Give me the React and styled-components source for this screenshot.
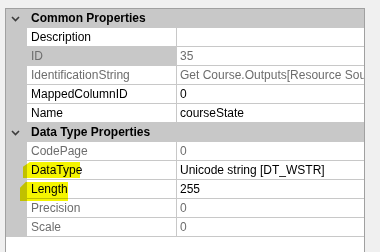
import React from "react";
import styled, { createGlobalStyle } from "styled-components";

const Global = createGlobalStyle`
  html, body { margin: 0; padding: 0; background: #f0f0f0; overflow: hidden; }
  body { font-family: "Liberation Sans", Arial, sans-serif; font-size: 12px; }
`;

const Page = styled.div`
  padding: 8px 0 0 5px;
  height: 252px;
  box-sizing: border-box;
`;

const Panel = styled.div`
  position: relative;
  width: 360px;
  height: 244px;
  box-sizing: border-box;
  border: 1px solid #a0a0a0;
  border-bottom: none;
  background: #ffffff;
`;

const CategoryRow = styled.div`
  display: grid;
  grid-template-columns: 21px 1fr;
  height: 19px;
  background: #c8c8c8;
  align-items: center;
`;

const Chevron = styled.svg`
  width: 21px;
  height: 19px;
  display: block;
`;

const CategoryLabel = styled.div`
  font-weight: bold;
  color: #000;
  padding-left: 4px;
  line-height: 19px;
  white-space: nowrap;
`;

const Row = styled.div`
  display: grid;
  grid-template-columns: 21px 149px 1px 187px;
  height: 19px;
`;

const Gutter = styled.div`
  background: #c8c8c8;
`;

const NameCell = styled.div`
  padding-left: 4px;
  line-height: 18px;
  height: 18px;
  border-bottom: 1px solid #c8c8c8;
  background: ${(p) => (p.$selected ? "#c8c8c8" : "#ffffff")};
  color: ${(p) => (p.$readonly ? "#6d6d6d" : "#000000")};
  white-space: nowrap;
  overflow: hidden;
`;

const Divider = styled.div`
  background: #c8c8c8;
`;

const ValueCell = styled.div`
  padding-left: 3px;
  line-height: 18px;
  height: 18px;
  border-bottom: 1px solid #c8c8c8;
  color: ${(p) => (p.$readonly ? "#6d6d6d" : "#000000")};
  white-space: nowrap;
  overflow: hidden;
`;

const Highlight = styled.div`
  position: absolute;
  background: #f5f500;
  mix-blend-mode: multiply;
  pointer-events: none;
  clip-path: polygon(12% 0, 100% 0, 100% 100%, 0 100%, 0 30%);
`;

const categories = [
  {
    title: "Common Properties",
    rows: [
      { name: "Description", value: "" },
      { name: "ID", value: "35", readonly: true, selected: true },
      { name: "IdentificationString", value: "Get Course.Outputs[Resource Source Output]", readonly: true },
      { name: "MappedColumnID", value: "0" },
      { name: "Name", value: "courseState" },
    ],
  },
  {
    title: "Data Type Properties",
    rows: [
      { name: "CodePage", value: "0", readonly: true },
      { name: "DataType", value: "Unicode string [DT_WSTR]" },
      { name: "Length", value: "255" },
      { name: "Precision", value: "0", readonly: true },
      { name: "Scale", value: "0", readonly: true },
    ],
  },
];

function ChevronIcon() {
  return (
    <Chevron viewBox="0 0 21 19">
      <path d="M6 8 L9.5 11.5 L13 8" fill="none" stroke="#3c3c3c" strokeWidth="1.6" />
    </Chevron>
  );
}

export default function App() {
  return (
    <>
      <Global />
      <Page>
        <Panel>
          {categories.map((cat) => (
            <React.Fragment key={cat.title}>
              <CategoryRow>
                <ChevronIcon />
                <CategoryLabel>{cat.title}</CategoryLabel>
              </CategoryRow>
              {cat.rows.map((r) => (
                <Row key={r.name}>
                  <Gutter />
                  <NameCell $readonly={r.readonly} $selected={r.selected}>
                    {r.name}
                  </NameCell>
                  <Divider />
                  <ValueCell $readonly={r.readonly}>{r.value}</ValueCell>
                </Row>
              ))}
            </React.Fragment>
          ))}
          <Highlight style={{ left: 17, top: 153, width: 57, height: 16 }} />
          <Highlight style={{ left: 14, top: 173, width: 48, height: 19 }} />
        </Panel>
      </Page>
    </>
  );
}
